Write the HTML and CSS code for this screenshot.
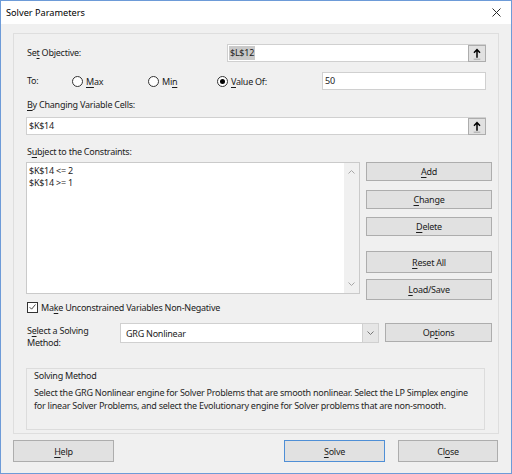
FILE: index.html
```html
<!DOCTYPE html>
<html>
<head>
<meta charset="utf-8">
<link rel="stylesheet" href="styles.css">
</head>
<body>
<div class="window">
  <div class="titlebar">
    <span class="title">Solver Parameters</span>
    <svg class="close" width="9" height="9" viewBox="0 0 9 9"><path d="M0.5 0.5L8.5 8.5M8.5 0.5L0.5 8.5" stroke="#2a2a2a" stroke-width="1" fill="none"/></svg>
  </div>

  <div class="panel">
    <div class="row row-obj">
      <span class="label lbl-obj">Se<u>t</u> Objective:</span>
      <div class="field field-obj">
        <span class="sel">$L$12</span>
        <span class="refbtn"><svg width="17" height="16" viewBox="0 0 17 16"><path d="M8.5 3.2V12M5.3 6.6L8.5 3.2L11.7 6.6" stroke="#000" stroke-width="1.6" fill="none"/><path d="M5 13.5H12" stroke="#a0a0a0" stroke-width="1"/></svg></span>
      </div>
    </div>

    <div class="row row-to">
      <span class="label lbl-to">To:</span>
      <span class="radio r-max"><span class="circle"></span><span><u>M</u>ax</span></span>
      <span class="radio r-min"><span class="circle"></span><span>Mi<u>n</u></span></span>
      <span class="radio r-val"><span class="circle on"><span class="dot"></span></span><span><u>V</u>alue Of:</span></span>
      <div class="field field-val">50</div>
    </div>

    <div class="label lbl-changing"><u>B</u>y Changing Variable Cells:</div>
    <div class="field field-changing">
      <span class="ftext">$K$14</span>
      <span class="refbtn"><svg width="17" height="16" viewBox="0 0 17 16"><path d="M8.5 3.2V12M5.3 6.6L8.5 3.2L11.7 6.6" stroke="#000" stroke-width="1.6" fill="none"/><path d="M5 13.5H12" stroke="#a0a0a0" stroke-width="1"/></svg></span>
    </div>

    <div class="label lbl-subject">S<u>u</u>bject to the Constraints:</div>
    <div class="constraints">
      <div class="listbox">
        <div class="items">
          <div>$K$14 &lt;= 2</div>
          <div>$K$14 &gt;= 1</div>
        </div>
        <div class="scroll">
          <svg width="7" height="4" viewBox="0 0 7 4"><path d="M0.5 3.5L3.5 0.5L6.5 3.5" stroke="#a6a6a6" fill="none"/></svg>
          <svg width="7" height="4" viewBox="0 0 7 4"><path d="M0.5 0.5L3.5 3.5L6.5 0.5" stroke="#a6a6a6" fill="none"/></svg>
        </div>
      </div>
      <div class="btncol">
        <div class="btn b-add"><u>A</u>dd</div>
        <div class="btn b-change"><u>C</u>hange</div>
        <div class="btn b-delete"><u>D</u>elete</div>
        <div class="btn b-reset"><u>R</u>eset All</div>
        <div class="btn b-load"><u>L</u>oad/Save</div>
      </div>
    </div>

    <div class="check-row">
      <span class="checkbox"><svg width="10" height="10" viewBox="0 0 10 10"><path d="M1.8 5.2L4 7.4L8.3 2.2" stroke="#333" stroke-width="1" fill="none"/></svg></span>
      <span>Ma<u>k</u>e Unconstrained Variables Non-Negative</span>
    </div>

    <div class="method-row">
      <div class="label lbl-method">S<u>e</u>lect a Solving<br>Method:</div>
      <div class="dropdown">
        <span class="dtext">GRG Nonlinear</span>
        <span class="dbtn"><svg width="7" height="4" viewBox="0 0 7 4"><path d="M0.5 0.5L3.5 3.5L6.5 0.5" stroke="#777" fill="none"/></svg></span>
      </div>
      <div class="btn b-options">Op<u>t</u>ions</div>
    </div>

    <div class="groupbox">
      <div class="gtitle">Solving Method</div>
      <div class="gtext">Select the GRG Nonlinear engine for Solver Problems that are smooth nonlinear. Select the LP Simplex engine for linear Solver Problems, and select the Evolutionary engine for Solver problems that are non-smooth.</div>
    </div>
  </div>

  <div class="footer">
    <div class="btn b-help"><u>H</u>elp</div>
    <div class="spacer"></div>
    <div class="btn b-solve"><u>S</u>olve</div>
    <div class="btn b-close">Cl<u>o</u>se</div>
  </div>
</div>
</body>
</html>
```
FILE: styles.css
```css
* { box-sizing: border-box; margin: 0; padding: 0; }
html, body { width: 512px; height: 474px; overflow: hidden; }
body {
  margin: 0;
  font-family: "Noto Sans", "Open Sans", sans-serif;
  font-size: 9px;
  letter-spacing: -0.25px;
  color: #1c1c1c;
  background: #ffffff;
}
u { text-decoration: underline; text-decoration-thickness: 1px; text-underline-offset: 1.5px; }

.window {
  width: 512px;
  height: 474px;
  border: 1px solid #6d9bd8;
  background: #f0f0f0;
  display: flex;
  flex-direction: column;
}

.titlebar {
  flex: none;
  height: 23px;
  background: #ffffff;
  display: flex;
  align-items: center;
  padding: 0 10px 0 5px;
}
.title { flex: 1; font-size: 9.2px; letter-spacing: 0; color: #000; }
.close { display: block; }

.panel {
  flex: none;
  margin: 9px 12px 0 12px;
  height: 401px;
  border: 1px solid #dedede;
  padding: 10px 5px 0 12px;
  display: flex;
  flex-direction: column;
}

.row { display: flex; align-items: center; height: 18px; flex: none; }
.label { line-height: 14px; padding-left: 1px; }
.lbl-obj { width: 201px; }
.row-to { margin-top: 10px; }
.lbl-to { width: 46px; }

.field {
  background: #ffffff;
  border: 1px solid #d0d0d0;
  height: 18px;
  display: flex;
  align-items: center;
  line-height: 14px;
}
.field-obj { width: 259px; padding-left: 1px; }
.sel { background: #c9c9c9; padding: 0 1px; }
.refbtn {
  margin-left: auto;
  width: 18px;
  height: 17px;
  margin-right: -1px;
  margin-top: 1px;
  border: 1px solid #adadad;
  background: #e1e1e1;
  display: flex;
  align-items: center;
  justify-content: center;
}
.refbtn svg { display: block; }

.radio { display: flex; align-items: center; }
.r-max { width: 76px; }
.r-min { width: 69px; }
.r-val { width: 105px; }
.circle {
  width: 11px;
  height: 11px;
  border: 1px solid #333;
  border-radius: 50%;
  background: #fff;
  margin-right: 3px;
  display: flex;
  align-items: center;
  justify-content: center;
  flex: none;
}
.dot { width: 5px; height: 5px; border-radius: 50%; background: #000; }
.field-val { width: 164px; padding-left: 2px; }

.lbl-changing { margin-top: 8px; }
.field-changing { margin-top: 5px; width: 460px; padding-left: 2px; flex: none; }

.lbl-subject { margin-top: 10px; }

.constraints { display: flex; margin-top: 3px; gap: 6px; flex: none; align-items: flex-start; }
.listbox {
  width: 334px;
  height: 132px;
  background: #fff;
  border: 1px solid #cacaca;
  display: flex;
}
.items { flex: 1; padding: 2px 0 0 2px; line-height: 12px; }
.scroll {
  width: 15px;
  background: #f0f0f0;
  display: flex;
  flex-direction: column;
  justify-content: space-between;
  align-items: center;
  padding: 7px 0 7px 0;
}
.scroll svg { display: block; }

.btncol { width: 126px; display: flex; flex-direction: column; }
.btn {
  background: #e1e1e1;
  border: 1px solid #adadad;
  display: flex;
  align-items: center;
  justify-content: center;
  flex: none;
}
.b-add { height: 19px; }
.b-change { height: 19px; margin-top: 9px; }
.b-delete { height: 19px; margin-top: 8px; }
.b-reset { height: 22px; margin-top: 15px; }
.b-load { height: 21px; margin-top: 6px; }

.check-row { display: flex; align-items: center; height: 14px; flex: none; padding-left: 1px; }
.checkbox {
  width: 11px;
  height: 11px;
  border: 1px solid #333;
  background: #fff;
  margin-right: 3px;
  display: flex;
  align-items: center;
  justify-content: center;
}
.checkbox svg { display: block; }

.method-row { display: flex; align-items: flex-start; margin-top: 9px; flex: none; }
.lbl-method { width: 94px; line-height: 12.5px; padding-top: 1.5px; }
.dropdown {
  width: 259px;
  height: 20px;
  background: #fff;
  border: 1px solid #d0d0d0;
  display: flex;
  align-items: center;
}
.dtext { flex: 1; padding-left: 5px; }
.dbtn {
  width: 16px;
  height: 100%;
  background: #e6e6e6;
  border-left: 1px solid #d0d0d0;
  display: flex;
  align-items: center;
  justify-content: center;
}
.dbtn svg { display: block; }
.b-options { width: 107px; height: 19px; margin-left: 6px; }

.groupbox {
  margin-top: 18px;
  width: 459px;
  height: 62px;
  border: 1px solid #dcdcdc;
  padding: 1.5px 7px 0 7px;
  line-height: 12.5px;
  flex: none;
}
.gtitle { margin-bottom: 4.5px; }
.gtext { color: #262626; }

.footer {
  flex: none;
  display: flex;
  margin-top: 6px;
  padding: 0 13px 0 12px;
}
.spacer { flex: 1; }
.footer .btn { height: 22px; }
.b-help { width: 101px; }
.b-solve { width: 101px; border-color: #4f8fd6; margin-right: 13px; }
.b-close { width: 100px; }
```
